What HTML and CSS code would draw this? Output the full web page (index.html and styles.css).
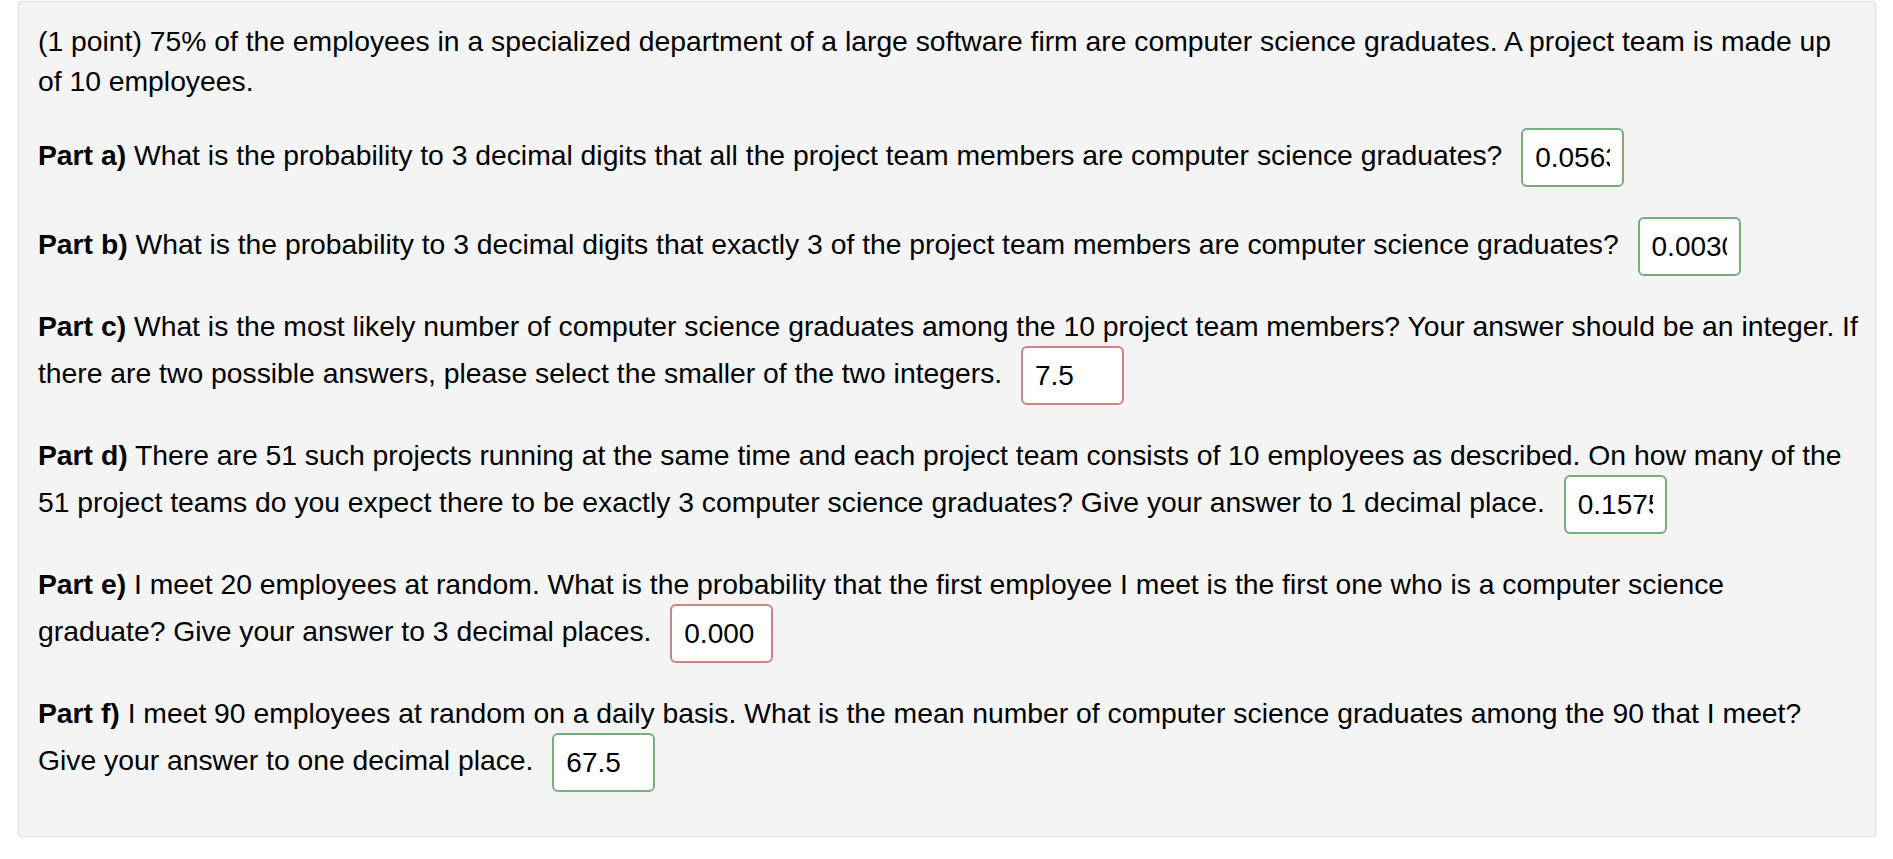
FILE: index.html
```html
<!DOCTYPE html>
<html lang="en">
<head>
<meta charset="utf-8">
<title>Problem</title>
<link rel="stylesheet" href="styles.css">
</head>
<body>
<div class="problem">
  <p class="intro">(1 point) 75% of the employees in a specialized department of a large software firm are computer science graduates. A project team is made up<br>of 10 employees.</p>
  <p class="part"><b>Part a)</b> What is the probability to 3 decimal digits that all the project team members are computer science graduates? <input class="ans correct" type="text" value="0.0563" readonly></p>
  <p class="part"><b>Part b)</b> What is the probability to 3 decimal digits that exactly 3 of the project team members are computer science graduates? <input class="ans correct" type="text" value="0.0030" readonly></p>
  <p class="part"><b>Part c)</b> What is the most likely number of computer science graduates among the 10 project team members? Your answer should be an integer. If<br>there are two possible answers, please select the smaller of the two integers. <input class="ans wrong" type="text" value="7.5" readonly></p>
  <p class="part"><b>Part d)</b> There are 51 such projects running at the same time and each project team consists of 10 employees as described. On how many of the<br>51 project teams do you expect there to be exactly 3 computer science graduates? Give your answer to 1 decimal place. <input class="ans correct" type="text" value="0.1575" readonly></p>
  <p class="part"><b>Part e)</b> I meet 20 employees at random. What is the probability that the first employee I meet is the first one who is a computer science<br>graduate? Give your answer to 3 decimal places. <input class="ans wrong" type="text" value="0.000" readonly></p>
  <p class="part last"><b>Part f)</b> I meet 90 employees at random on a daily basis. What is the mean number of computer science graduates among the 90 that I meet?<br>Give your answer to one decimal place. <input class="ans correct" type="text" value="67.5" readonly></p>
</div>
</body>
</html>
```
FILE: styles.css
```css
html, body {
  margin: 0;
  padding: 0;
  background: #ffffff;
}

body {
  font-family: "Liberation Sans", Arial, Helvetica, sans-serif;
  font-size: 28.3px;
  line-height: 40px;
  color: #000000;
}

.problem {
  margin: 1px 17px 0 18px;
  padding: 19px 8px 19px 19px;
  background: #f4f4f4;
  border: 1px solid #dedede;
  border-radius: 4px;
  box-shadow: 0 1px 2px rgba(0, 0, 0, 0.08);
}

.problem p {
  margin: 0 0 30px 0;
}

.problem p.intro {
  margin-bottom: 27px;
}

.problem p.last {
  margin-bottom: 25px;
}

.problem b {
  font-weight: bold;
}

.ans {
  box-sizing: border-box;
  width: 103px;
  height: 59px;
  margin: 0 0 0 11px;
  padding: 0 12px;
  font-family: "Liberation Sans", Arial, Helvetica, sans-serif;
  font-size: 28px;
  color: #000000;
  background: #ffffff;
  border: 2px solid #79ad7f;
  border-radius: 6px;
  vertical-align: middle;
  outline: none;
}

.ans.wrong {
  border-color: #cc8585;
}
```
